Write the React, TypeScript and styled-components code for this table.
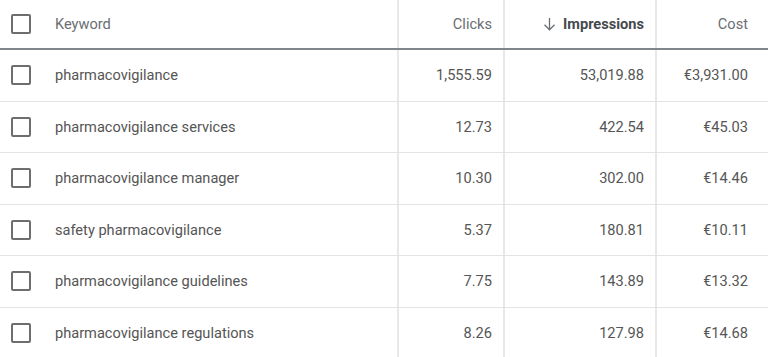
import styled, { createGlobalStyle } from 'styled-components';

const GlobalStyle = createGlobalStyle`
  body {
    margin: 0;
    background: #ffffff;
    font-family: Roboto, 'Liberation Sans', Arial, sans-serif;
  }
`;

const Table = styled.div`
  width: 768px;
  height: 357px;
  overflow: hidden;
  background: #ffffff;
`;

const Row = styled.div<{ $head?: boolean }>`
  display: grid;
  grid-template-columns: 397px 106px 152px 1fr;
  box-sizing: border-box;
  height: ${(p) => (p.$head ? '50px' : '51.5px')};
  border-bottom: ${(p) => (p.$head ? '2px solid #80868b' : '1px solid #e3e3e3')};
`;

const KeywordCell = styled.div<{ $head?: boolean }>`
  display: flex;
  align-items: center;
  gap: 24px;
  padding-left: 11px;
  font-size: 14.6px;
  color: ${(p) => (p.$head ? '#6a6e72' : '#555555')};
`;

const NumCell = styled.div<{ $head?: boolean; $active?: boolean; $last?: boolean }>`
  display: flex;
  align-items: center;
  justify-content: flex-end;
  gap: 7px;
  border-left: 2px solid #e8e8e8;
  padding-right: ${(p) => (p.$last ? '20px' : '11px')};
  font-size: 14.6px;
  font-weight: ${(p) => (p.$active ? 700 : 400)};
  color: ${(p) => (p.$active ? '#45494d' : p.$head ? '#6a6e72' : '#555555')};
`;

const Checkbox = styled.span`
  box-sizing: border-box;
  width: 20px;
  height: 20px;
  border: 2.5px solid #6e6e6e;
  border-radius: 2px;
  flex-shrink: 0;
`;

const SortArrow = () => (
  <svg width="13" height="14" viewBox="0 0 13 14" fill="none" stroke="#6a6e72" strokeWidth="1.3">
    <path d="M6.5 1 V12.5" />
    <path d="M1.5 7.8 L6.5 12.8 L11.5 7.8" />
  </svg>
);

const rows = [
  { keyword: 'pharmacovigilance', clicks: '1,555.59', impressions: '53,019.88', cost: '€3,931.00' },
  { keyword: 'pharmacovigilance services', clicks: '12.73', impressions: '422.54', cost: '€45.03' },
  { keyword: 'pharmacovigilance manager', clicks: '10.30', impressions: '302.00', cost: '€14.46' },
  { keyword: 'safety pharmacovigilance', clicks: '5.37', impressions: '180.81', cost: '€10.11' },
  { keyword: 'pharmacovigilance guidelines', clicks: '7.75', impressions: '143.89', cost: '€13.32' },
  { keyword: 'pharmacovigilance regulations', clicks: '8.26', impressions: '127.98', cost: '€14.68' },
];

const App = () => {
  return (
    <Table>
      <GlobalStyle />
      <Row $head>
        <KeywordCell $head>
          <Checkbox />
          Keyword
        </KeywordCell>
        <NumCell $head>Clicks</NumCell>
        <NumCell $head $active>
          <SortArrow />
          Impressions
        </NumCell>
        <NumCell $head $last>Cost</NumCell>
      </Row>
      {rows.map((r) => (
        <Row key={r.keyword}>
          <KeywordCell>
            <Checkbox />
            {r.keyword}
          </KeywordCell>
          <NumCell>{r.clicks}</NumCell>
          <NumCell>{r.impressions}</NumCell>
          <NumCell $last>{r.cost}</NumCell>
        </Row>
      ))}
    </Table>
  );
};

export default App;
